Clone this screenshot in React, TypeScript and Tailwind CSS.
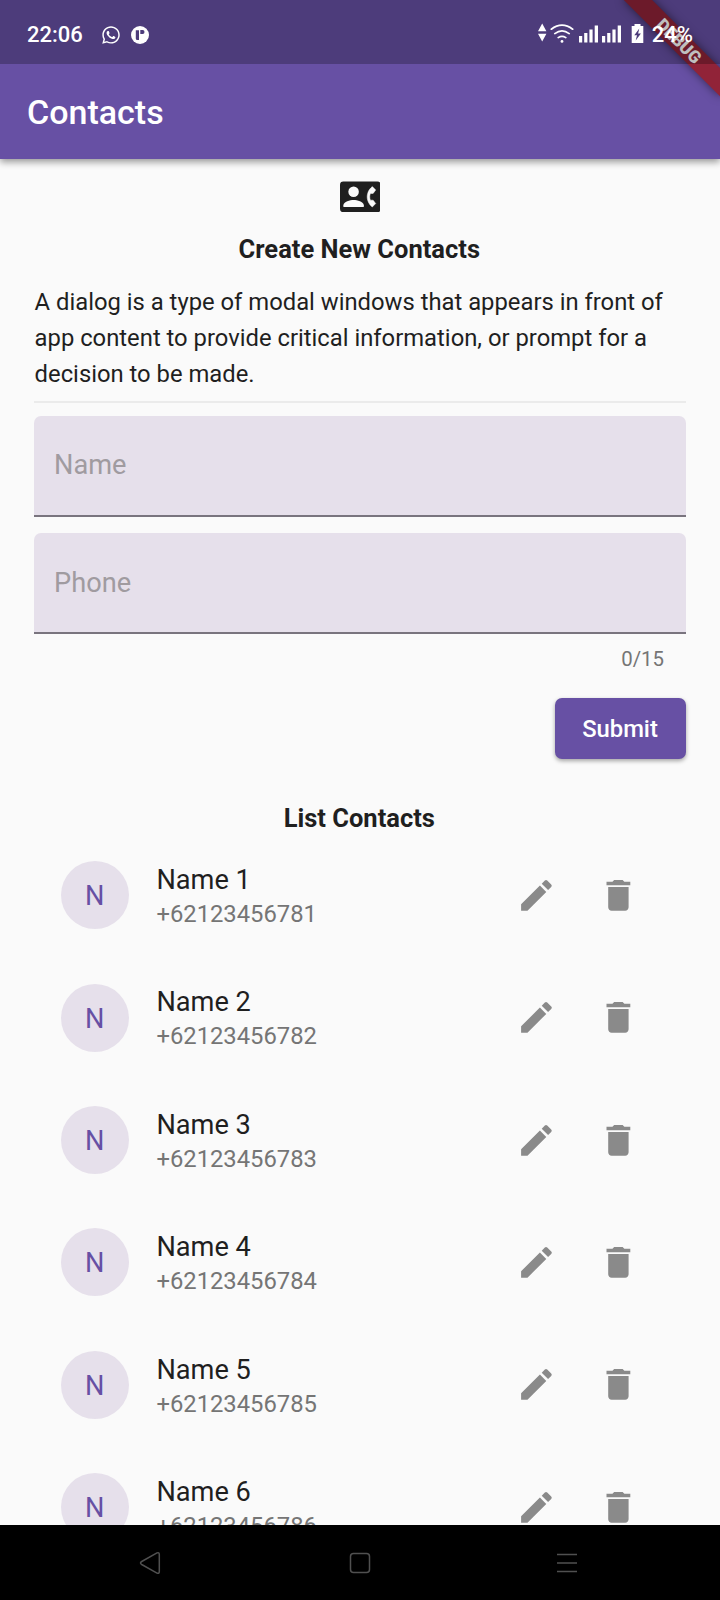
import { FaWhatsapp } from "react-icons/fa";
import { MdDelete, MdEdit } from "react-icons/md";

const contacts = [1, 2, 3, 4, 5, 6].map((n) => ({
  name: `Name ${n}`,
  phone: `+6212345678${n}`,
}));

function StatusBar() {
  return (
    <div className="relative z-20 flex h-16 items-center bg-black/25 pt-[5px] pl-[27px] text-[22px] leading-[26px] font-medium text-white">
      <span>22:06</span>
      <FaWhatsapp className="ml-[18px] size-[20px]" />
      <svg viewBox="0 0 18 18" className="ml-[10px] size-[18px]">
        <circle cx="9" cy="9" r="9" fill="#fff" />
        <path d="M4.800 4.200h3.200v9.800h-1.600q-1.600 0-1.600-1.600zM9.300 4h2.400q1.800 0 1.800 2t-1.800 2H9.300z" fill="#4d3c7b" />
      </svg>
      <svg viewBox="538 22.6 106 20" className="absolute top-[23px] left-[538px] h-5 w-[106px]" fill="#fff">
        <path d="M542.200 23l4.200 7.800h-8.400zM542.200 41.200l-4.200-7.800h8.400z" />
        <g fill="none" stroke="#fff" strokeWidth="1.700" strokeLinecap="round">
          <path d="M551.300 28.800q10.700-8 21.400 0M554.800 33.200q7.200-5.400 14.400 0M558.200 37.200q3.800-2.600 7.600 0" />
        </g>
        <circle cx="562" cy="41" r="1.400" />
        <path d="M579 35.500h3.200V42H579zM584.200 32.500h3.200V42h-3.200zM589.400 29h3.200v13h-3.200zM594.700 25h3.300v17h-3.300z" />
        <path d="M602 35.500h3.200V42H602zM607.200 32.500h3.200V42h-3.200zM612.400 29h3.200v13h-3.200zM617.700 25h3.300v17h-3.300z" />
        <path d="M634.500 23.600h6v2h2.800v17h-11.600v-17h2.800z" />
        <path d="M639.300 28.100l-5 6.700h2.700l-1.300 5.300 5.200-7h-2.800z" fill="#4d3c7b" />
      </svg>
      <span className="ml-auto pr-[27px]">24%</span>
    </div>
  );
}

function DebugBanner() {
  return (
    <div className="absolute top-0 right-0 z-10 h-[110px] w-[120px] overflow-hidden">
      <div className="absolute top-0 left-[120px] size-0 rotate-45">
        <div className="absolute top-[47.6px] left-[-68px] flex h-[20.4px] w-[136px] items-center justify-center bg-[#912338] text-[17.3px] leading-[20px] font-black text-white shadow-[0_0_10px_rgba(0,0,0,0.5)]">
          DEBUG
        </div>
      </div>
    </div>
  );
}

function ContactPhoneIcon() {
  return (
    <svg viewBox="0 0 24 24" className="mx-auto size-[40.800px] translate-y-[0.4px]">
      <rect x="0" y="3" width="24" height="18" rx="2" fill="currentColor" />
      <g fill="#fafafa">
        <circle cx="8" cy="9" r="3.100" />
        <path d="M14 18H2v-1c0-2 4-3.100 6-3.100s6 1.100 6 3.100z" />
        <path
          d="M17.850 14h1.640L21 16l-1.990 1.990c-1.310-.98-2.280-2.380-2.730-3.990-.18-.64-.28-1.310-.28-2s.1-1.360.28-2c.45-1.620 1.420-3.010 2.730-3.990L21 8l-1.510 2h-1.640c-.22.63-.35 1.300-.35 2s.13 1.370.35 2z"
          stroke="#fafafa"
          strokeWidth="0.300"
          strokeLinejoin="round"
        />
      </g>
    </svg>
  );
}

function Field({ label, className }: { label: string; className?: string }) {
  return (
    <div className={`flex h-[101px] items-center rounded-t-[7px] border-b-2 border-[#79747e] bg-[#e6e0eb] pl-5 text-[27.2px] leading-8 text-[#a09ba0] ${className ?? ""}`}>
      {label}
    </div>
  );
}

function ContactRow({ name, phone }: { name: string; phone: string }) {
  return (
    <li className="flex h-[122.4px] items-center pr-[81.4px] pl-[61.2px]">
      <div className="flex size-[68px] items-center justify-center rounded-full bg-[#e6e0eb] pt-[2px] pr-px text-[27.2px] leading-8 text-[#6750a4]">
        N
      </div>
      <div className="mt-[2.800px] ml-[27.200px] flex-1">
        <div className="text-[27.2px] leading-9 text-[#1f1f1f]">{name}</div>
        <div className="text-[23.8px] leading-[33px] text-[#757575]">{phone}</div>
      </div>
      <MdEdit className="size-[40.800px] text-[#8a8a8a]" />
      <MdDelete className="ml-[40.800px] size-[40.800px] text-[#8a8a8a]" />
    </li>
  );
}

function NavigationBar() {
  return (
    <nav className="flex h-[75px] shrink-0 items-center bg-black text-[#505050]">
      <svg viewBox="0 0 24 24" className="ml-[138px] size-6" fill="none" stroke="currentColor" strokeWidth="1.500">
        <path d="M19 1.900 3.700 10.500q-2.400 1.500 0 3l15.300 8.600q2.300.8 2.300-1.700V3.600q0-2.500-2.300-1.700z" />
      </svg>
      <svg viewBox="0 0 24 24" className="ml-[186px] size-6" fill="none" stroke="currentColor" strokeWidth="1.500">
        <rect x="2.500" y="2.500" width="19" height="19" rx="3" />
      </svg>
      <svg viewBox="0 0 24 24" className="ml-[183px] size-6" fill="none" stroke="currentColor" strokeWidth="1.500">
        <path d="M2 3.500h20M2 12h20M2 20.500h20" />
      </svg>
    </nav>
  );
}

export default function App() {
  return (
    <div className="flex h-[1600px] w-[720px] flex-col overflow-hidden bg-[#fafafa] font-[Roboto,sans-serif] text-[#1f1f1f]">
      <header className="relative z-10 h-[159px] shrink-0 bg-[#6750a4] shadow-[0_3px_7px_rgba(0,0,0,0.4)]">
        <StatusBar />
        <DebugBanner />
        <h1 className="flex h-[95px] items-center pl-[27px] text-[34px] leading-10 font-medium text-white">Contacts</h1>
      </header>
      <main className="min-h-0 flex-1 overflow-hidden">
        <section className="px-[34px] pt-[17px]">
          <ContactPhoneIcon />
          <h2 className="mt-[17px] pr-[1.400px] text-center text-[25.5px] leading-[30px] font-bold">Create New Contacts</h2>
          <p className="mt-5 pl-[0.6px] text-[23.8px] leading-9">
            A dialog is a type of modal windows that appears in front of app content to provide critical information, or prompt for a decision to be made.
          </p>
          <div className="mt-[9px] mb-[13px] h-[2px] bg-[#ebebeb]" />
          <Field label="Name" />
          <div className="h-4" />
          <Field label="Phone" className="pt-[2px]" />
          <div className="mt-[13px] pr-[22px] text-right text-[20.4px] leading-6 text-[#757575]">0/15</div>
          <button className="mt-[27px] ml-auto flex h-[61px] w-[131px] items-center justify-center rounded-[7px] bg-[#6750a4] pt-px pr-px text-[23.8px] leading-7 font-medium text-white shadow-[0_2px_4px_rgba(0,0,0,0.35)]">
            Submit
          </button>
        </section>
        <h2 className="mt-11 pr-[1.400px] text-center text-[25.5px] leading-[30px] font-bold">List Contacts</h2>
        <ul className="pt-[1.2px]">
          {contacts.map((c) => (
            <ContactRow key={c.name} {...c} />
          ))}
        </ul>
      </main>
      <NavigationBar />
    </div>
  );
}
